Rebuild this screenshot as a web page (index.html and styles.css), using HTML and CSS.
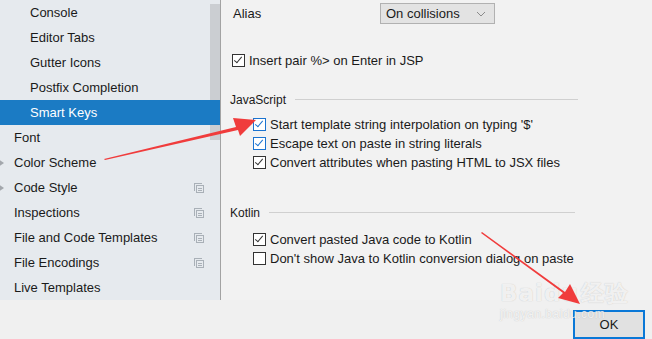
FILE: index.html
```html
<!DOCTYPE html>
<html lang="en">
<head>
    <meta charset="UTF-8">
    <title>Settings - Smart Keys</title>
    <link rel="stylesheet" href="styles.css">
</head>
<body>
    <div class="dialog">
        <div class="main">
            <div class="sidebar">
                <div class="scroll-thumb"></div>
                <div class="tree-item child">Console</div>
                <div class="tree-item child">Editor Tabs</div>
                <div class="tree-item child">Gutter Icons</div>
                <div class="tree-item child">Postfix Completion</div>
                <div class="tree-item child selected">Smart Keys</div>
                <div class="tree-item">Font</div>
                <div class="tree-item expandable">Color Scheme</div>
                <div class="tree-item expandable">Code Style <span class="copy-icon"></span></div>
                <div class="tree-item">Inspections <span class="copy-icon"></span></div>
                <div class="tree-item">File and Code Templates <span class="copy-icon"></span></div>
                <div class="tree-item">File Encodings <span class="copy-icon"></span></div>
                <div class="tree-item">Live Templates</div>
            </div>

            <div class="content">
                <div class="alias-row">
                    <span class="alias-label">Alias</span>
                    <div class="combo">
                        <span>On collisions</span>
                        <svg class="combo-arrow" width="10" height="6" viewBox="0 0 10 6"><path d="M1 1 L5 5 L9 1" fill="none" stroke="#8a8a8a" stroke-width="1"/></svg>
                    </div>
                </div>

                <label class="check top-check"><span class="box checked"></span>Insert pair %&gt; on Enter in JSP</label>

                <div class="section-title">JavaScript<span class="rule"></span></div>
                <div class="check-list">
                    <label class="check"><span class="box checked focus"></span>Start template string interpolation on typing '$'</label>
                    <label class="check"><span class="box checked focus"></span>Escape text on paste in string literals</label>
                    <label class="check"><span class="box checked"></span>Convert attributes when pasting HTML to JSX files</label>
                </div>

                <div class="section-title kotlin">Kotlin<span class="rule"></span></div>
                <div class="check-list">
                    <label class="check"><span class="box checked"></span>Convert pasted Java code to Kotlin</label>
                    <label class="check"><span class="box"></span>Don't show Java to Kotlin conversion dialog on paste</label>
                </div>
            </div>
        </div>

        <div class="footer">
            <button class="btn-ok">OK</button>
        </div>

        <div class="watermark">
            <div class="wm-logo">Bai<span class="wm-du">du</span>经验</div>
            <div class="wm-url">jingyan.baidu.com</div>
        </div>

        <svg class="arrows" width="652" height="339" viewBox="0 0 652 339">
            <path d="M104 159 L236 127 L233 118 L256 120 L240 136 L238 130 L105 160 Z" fill="#f03c3c"/>
            <path d="M482 232 L565 292 L570 284 L580 304 L558 298 L563 293 L481 233 Z" fill="#f03c3c"/>
        </svg>
    </div>
</body>
</html>
```

FILE: styles.css
```css
body {
    margin: 0;
    font-family: 'Liberation Sans', Arial, sans-serif;
    font-size: 13px;
    color: #1a1a1a;
    background: #f0f0f0;
}

.dialog {
    position: relative;
    width: 652px;
    height: 339px;
    overflow: hidden;
    display: flex;
    flex-direction: column;
}

.main {
    display: flex;
    height: 300px;
}

/* left settings tree */
.sidebar {
    position: relative;
    width: 220px;
    background: #e6eaee;
    border-right: 1px solid #a3a3a3;
}

.scroll-thumb {
    position: absolute;
    left: 210px;
    top: 4px;
    width: 10px;
    height: 136px;
    background: #cbced2;
}

.tree-item {
    position: relative;
    height: 25px;
    line-height: 25px;
    padding-left: 14px;
    white-space: nowrap;
}

.tree-item.child {
    padding-left: 30px;
}

.tree-item.selected {
    background: #1b7bc4;
    color: #ffffff;
    z-index: 1;
}

.tree-item.expandable::before {
    content: '';
    position: absolute;
    left: -3px;
    top: 8px;
    width: 0;
    height: 0;
    border-top: 5px solid transparent;
    border-bottom: 5px solid transparent;
    border-left: 7px solid #a3a7ac;
}

.copy-icon {
    position: absolute;
    left: 194px;
    top: 8px;
    width: 7px;
    height: 7px;
    border: 1px solid #a9b0b7;
    border-right: none;
    border-bottom: none;
}

.copy-icon::after {
    content: '';
    position: absolute;
    left: 1px;
    top: 1px;
    width: 6px;
    height: 6px;
    border: 1px solid #a9b0b7;
    background: linear-gradient(#a9b0b7, #a9b0b7) 1px 2px / 4px 1px no-repeat,
                linear-gradient(#a9b0b7, #a9b0b7) 1px 4px / 4px 1px no-repeat,
                #e6eaee;
}

/* right panel */
.content {
    flex: 1;
    background: #f2f2f2;
    padding: 3px 0 0 9px;
}

.alias-row {
    display: flex;
    align-items: center;
    height: 21px;
}

.alias-label {
    width: 147px;
    padding-left: 3px;
}

.combo {
    display: flex;
    align-items: center;
    justify-content: space-between;
    box-sizing: border-box;
    width: 115px;
    height: 21px;
    padding: 0 8px 0 5px;
    background: #e3e3e3;
    border: 1px solid #b1b1b1;
}

.check {
    display: flex;
    align-items: center;
    height: 19px;
    white-space: nowrap;
}

.top-check {
    margin-top: 27px;
    padding-left: 2px;
}

.box {
    box-sizing: border-box;
    width: 13px;
    height: 13px;
    margin-right: 4px;
    border: 1px solid #333333;
    background: #ffffff;
    position: relative;
}

.box.checked::after {
    content: '';
    position: absolute;
    left: 3px;
    top: 0px;
    width: 3px;
    height: 7px;
    border-right: 1.3px solid #333333;
    border-bottom: 1.3px solid #333333;
    transform: rotate(40deg);
}

.box.focus {
    border-color: #1a73d0;
}

.box.focus.checked::after {
    border-color: #1a73d0;
}

.section-title {
    display: flex;
    align-items: center;
    height: 19px;
    margin-top: 20px;
    font-size: 12px;
}

.section-title .rule {
    width: 283px;
    height: 1px;
    margin-left: 9px;
    background: #d0d0d0;
}

.section-title.kotlin {
    margin-top: 31px;
}

.section-title.kotlin .rule {
    width: 306px;
}

.check-list {
    margin-top: 6px;
    padding-left: 23px;
}

.section-title.kotlin + .check-list {
    margin-top: 8px;
}

/* bottom button bar */
.footer {
    flex: 1;
    display: flex;
    justify-content: flex-end;
    align-items: flex-start;
    padding: 10px 7px 0 0;
}

.btn-ok {
    width: 72px;
    height: 29px;
    padding: 0;
    background: #e1e1e1;
    border: 2px solid #0a78d7;
    font-family: inherit;
    font-size: 13px;
    color: #1a1a1a;
}

.watermark {
    position: absolute;
    left: 500px;
    top: 280px;
    color: rgba(255, 255, 255, 0.8);
    text-shadow: 0 0 1px rgba(150, 150, 150, 0.6);
    pointer-events: none;
}

.wm-logo {
    font-family: 'DejaVu Sans', sans-serif;
    font-weight: bold;
    font-size: 23px;
    line-height: 26px;
    letter-spacing: 1px;
}

.wm-du {
    margin-right: 2px;
}

.wm-url {
    font-size: 12px;
    letter-spacing: 0.5px;
    margin-top: 1px;
}

.arrows {
    position: absolute;
    left: 0;
    top: 0;
    pointer-events: none;
}
```
